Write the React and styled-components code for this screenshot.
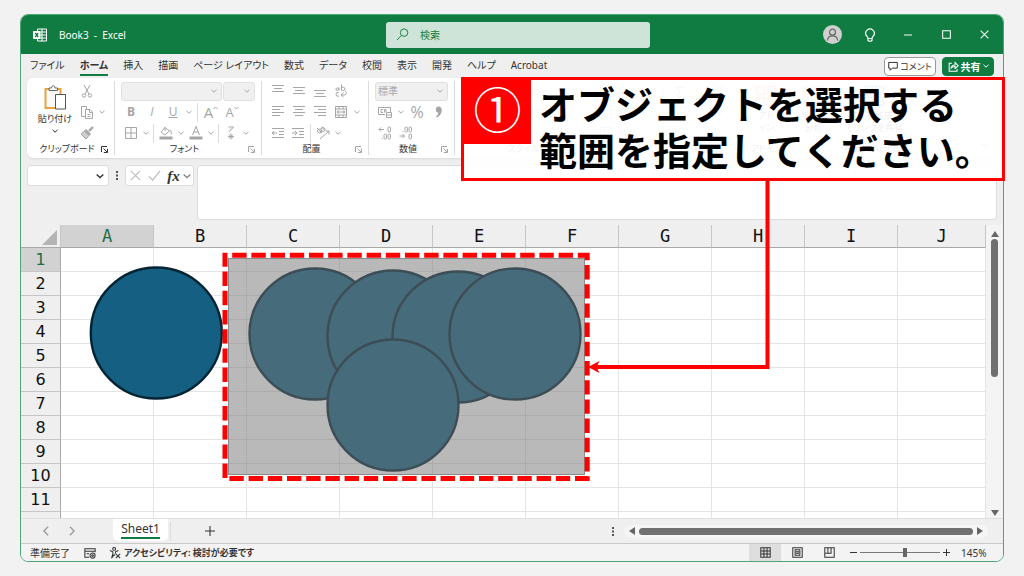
import styled, { createGlobalStyle } from "styled-components";

const GlobalStyle = createGlobalStyle`
  * {
    box-sizing: border-box;
  }
  body {
    margin: 0;
    background-color: #f2f2f2;
    color: #333;
    font-family: "Noto Sans", "Noto Sans CJK JP", sans-serif;
    font-size: 10px;
    font-feature-settings: "palt";
  }
  button, input, select, textarea {
    font: inherit;
    font-feature-settings: inherit;
    color: inherit;
    margin: 0;
    padding: 0;
    border: none;
    background: none;
    outline: none;
  }
  svg {
    display: block;
    flex: none;
  }
`;

const Page = styled.div`
  position: relative;
  height: 100vh;
  padding: 14px 20px;
`;

const Window = styled.main`
  height: 100%;
  display: flex;
  flex-direction: column;
  border: 1px solid #4ea57a;
  border-radius: 8px;
  background-color: #efefef;
  overflow: hidden;
`;

/* title bar */

const TitleBar = styled.header`
  height: 39px;
  flex: none;
  display: grid;
  grid-template-columns: 1fr 264px 1fr;
  align-items: center;
  padding-left: 12px;
  background-color: #107c41;
  color: white;
`;

const Brand = styled.div`
  display: flex;
  align-items: center;
  gap: 12px;
`;

const Title = styled.h1`
  margin: 0;
  font-size: 10px;
  font-weight: 400;
  white-space: pre;
`;

const Search = styled.label`
  height: 26px;
  display: flex;
  align-items: center;
  gap: 11px;
  padding-left: 10px;
  border-radius: 3px;
  background-color: #cfe4d8;
  color: #107c41;
`;

const SearchInput = styled.input`
  flex: 1;
  min-width: 0;
  &::placeholder {
    color: #107c41;
    opacity: 1;
  }
`;

const WindowButtons = styled.div`
  display: flex;
  justify-content: flex-end;
`;

const WindowButton = styled.button`
  width: 38px;
  height: 38px;
  display: flex;
  align-items: center;
  justify-content: center;
`;

const Avatar = styled.span`
  width: 19px;
  height: 19px;
  display: flex;
  align-items: center;
  justify-content: center;
  border-radius: 50%;
  background-color: #d0d0d0;
  color: #666;
`;

/* ribbon */

const TabRow = styled.nav`
  height: 24px;
  flex: none;
  display: flex;
  align-items: center;
  gap: 15px;
  padding: 0 9px;
`;

const Tab = styled.button`
  height: 20px;
  border-bottom: 2px solid ${(p) => (p.$active ? "#107c41" : "transparent")};
  font-weight: ${(p) => (p.$active ? 700 : 400)};
  line-height: 18px;
  white-space: nowrap;
`;

const TabActions = styled.div`
  display: flex;
  gap: 6px;
  margin-left: auto;
`;

const ActionButton = styled.button`
  width: 52px;
  height: 19px;
  display: flex;
  align-items: center;
  justify-content: center;
  gap: 2px;
  border: 1px solid ${(p) => (p.$primary ? "#107c41" : "#9a9a9a")};
  border-radius: 4px;
  background-color: ${(p) => (p.$primary ? "#107c41" : "white")};
  color: ${(p) => (p.$primary ? "white" : "#333")};
  font-size: ${(p) => (p.$primary ? 10 : 9)}px;
  font-weight: ${(p) => (p.$primary ? 700 : 400)};
  white-space: nowrap;
`;

const Ribbon = styled.section`
  height: 80px;
  flex: none;
  display: flex;
  margin: 0 6px;
  padding: 3px 0;
  border-radius: 6px;
  background-color: white;
  box-shadow: 0 1px 2px #d8d8d8;
  color: #a6a6a6;
`;

const Group = styled.div`
  width: ${(p) => p.$width}px;
  flex: none;
  display: flex;
  flex-direction: column;
  padding: 0 6px;
  border-right: 1px solid #dcdcdc;
`;

const GroupBody = styled.div`
  height: 62px;
  display: flex;
  flex-direction: column;
  gap: 1px;
`;

const ToolRow = styled.div`
  height: 20px;
  display: flex;
  align-items: center;
  gap: ${(p) => (p.$tight ? 0 : 1)}px;
`;

const GroupLabel = styled.div`
  height: 12px;
  display: flex;
  align-items: center;
  color: #333;
  font-size: 9px;
  line-height: 12px;
  text-align: center;
  white-space: nowrap;
`;

const LabelText = styled.span`
  flex: 1;
`;

const Tool = styled.button`
  width: 20px;
  height: 20px;
  display: flex;
  align-items: center;
  justify-content: center;
  flex: none;
`;

const WideTool = styled.button`
  display: flex;
  align-items: center;
  gap: 4px;
  white-space: nowrap;
`;

const BigTool = styled.button`
  width: ${(p) => p.$width}px;
  flex: none;
  display: flex;
  flex-direction: column;
  align-items: center;
  gap: 3px;
  padding-top: 4px;
  color: #333;
  font-size: 9px;
  line-height: 12px;
  white-space: pre;
`;

const Letter = styled.span`
  font-family: "Open Sans", sans-serif;
  font-size: ${(p) => p.$size || 12}px;
  font-weight: ${(p) => (p.$bold ? 700 : 400)};
  font-style: ${(p) => (p.$italic ? "italic" : "normal")};
  text-decoration: ${(p) => (p.$underline ? "underline" : "none")};
  line-height: 16px;
`;

const Divider = styled.span`
  width: 1px;
  height: 19px;
  margin: 0 2px;
  background-color: #dcdcdc;
`;

const DropButton = styled.button`
  width: 10px;
  height: 20px;
  display: flex;
  align-items: center;
  justify-content: center;
  flex: none;
`;

const SelectBox = styled.label`
  width: ${(p) => p.$width}px;
  height: 19px;
  display: flex;
  align-items: center;
  padding: 0 4px 0 2px;
  border: 1px solid #e0e0e0;
  border-radius: 3px;
  background-color: #f0f0f0;
`;

const Select = styled.select`
  flex: 1;
  min-width: 0;
  appearance: none;
`;

const Columns = styled.div`
  height: 62px;
  display: flex;
`;

const SmallTools = styled.div`
  display: flex;
  flex-direction: column;
  gap: 1px;
`;

const Collapse = styled.button`
  align-self: flex-end;
  margin: 0 8px 6px auto;
`;

/* formula bar */

const FormulaBar = styled.div`
  flex: none;
  display: flex;
  align-items: flex-start;
  padding: 7px 6px 5px;
`;

const NameBox = styled.div`
  width: 82px;
  height: 21px;
  display: flex;
  align-items: center;
  padding: 0 4px;
  border: 1px solid #dcdcdc;
  border-radius: 3px;
  background-color: white;
`;

const NameInput = styled.input`
  flex: 1;
  min-width: 0;
`;

const DotsBox = styled.span`
  width: 16px;
  height: 21px;
  display: flex;
  align-items: center;
  justify-content: center;
`;

const FxBox = styled.div`
  width: 69px;
  height: 21px;
  display: flex;
  align-items: center;
  margin-right: 3px;
  border: 1px solid #dcdcdc;
  border-radius: 3px;
  background-color: white;
  color: #888;
`;

const FxTool = styled(Tool)`
  width: 19px;
`;

const FxLetter = styled.span`
  color: #333;
  font-family: "Liberation Serif", serif;
  font-size: 15px;
  font-style: italic;
  font-weight: 700;
  line-height: 16px;
`;

const Formula = styled.textarea`
  flex: 1;
  height: 55px;
  border: 1px solid #dcdcdc;
  border-radius: 3px;
  background-color: white;
  resize: none;
`;

/* sheet */

const SheetArea = styled.div`
  flex: 1;
  min-height: 0;
  display: flex;
`;

const SheetClip = styled.div`
  flex: 1;
  min-width: 0;
  overflow: hidden;
  background-color: white;
`;

const Grid = styled.table`
  width: 100%;
  table-layout: fixed;
  border-collapse: separate;
  border-spacing: 0;
`;

const RowHeadCol = styled.col`
  width: 40px;
`;

const CellCol = styled.col`
  width: 93px;
`;

const ColHead = styled.th`
  height: 23px;
  padding: 0;
  border-right: 1px solid #c6c6c6;
  border-bottom: 1px solid #a8a8a8;
  background-color: ${(p) => (p.$active ? "#d2d2d2" : "#efefef")};
  color: ${(p) => (p.$active ? "#1f6b43" : "#111")};
  font-family: "DejaVu Sans Mono", monospace;
  font-size: 17px;
  font-weight: 400;
  line-height: 22px;
`;

const Corner = styled.td`
  padding: 0 3px 2px 0;
  border-right: 1px solid #c6c6c6;
  border-bottom: 1px solid #a8a8a8;
  background-color: #efefef;
  vertical-align: bottom;
  svg {
    margin-left: auto;
  }
`;

const RowHead = styled.th`
  height: 24px;
  padding: 0;
  border-right: 1px solid #a8a8a8;
  border-bottom: 1px solid #c6c6c6;
  background-color: ${(p) => (p.$active ? "#d2d2d2" : "#efefef")};
  color: ${(p) => (p.$active ? "#1f6b43" : "#111")};
  font-family: "DejaVu Sans", sans-serif;
  font-size: 16px;
  font-weight: 400;
  line-height: 22px;
`;

const Cell = styled.td`
  padding: 0;
  border-right: 1px solid #e4e4e4;
  border-bottom: 1px solid #e4e4e4;
`;

const VScroll = styled.div`
  width: 17px;
  display: flex;
  flex-direction: column;
  align-items: center;
  padding: 5px 0 1px;
  background-color: #f4f4f4;
`;

const VThumb = styled.div`
  width: 7px;
  height: 138px;
  margin: 1px 0 auto;
  border-radius: 4px;
  background-color: #707070;
`;

const SheetTabs = styled.div`
  height: 25px;
  flex: none;
  display: flex;
  align-items: center;
  padding-right: 15px;
  border-top: 1px solid #e0e0e0;
`;

const SheetNav = styled.div`
  width: 92px;
  display: flex;
  gap: 16px;
  padding-left: 20px;
  color: #9a9a9a;
`;

const SheetTab = styled.button`
  width: 55px;
  height: 22px;
  align-self: flex-start;
  padding-bottom: 3px;
  border-radius: 0 0 5px 5px;
  background-color: white;
  font-size: 12px;
  line-height: 16px;
  span {
    border-bottom: 2px solid #107c41;
  }
`;

const AddSheet = styled.button`
  margin-left: 32px;
`;

const HScroll = styled.div`
  width: 364px;
  height: 13px;
  display: flex;
  align-items: center;
  gap: 3px;
  margin-left: 10px;
  padding: 0 4px;
  border-radius: 7px;
  background-color: #f5f5f5;
`;

const HThumb = styled.div`
  flex: 1;
  height: 7px;
  border-radius: 4px;
  background-color: #707070;
`;

const StatusBar = styled.footer`
  height: 18px;
  flex: none;
  display: flex;
  align-items: center;
  padding: 0 15px 0 9px;
  border-top: 1px solid #c8c8c8;
  background-color: #f3f3f3;
  line-height: 12px;
`;

const Ready = styled.span`
  margin-right: 14px;
`;

const Access = styled.button`
  display: flex;
  align-items: center;
  gap: 3px;
  margin-left: 13px;
  font-size: 9px;
  font-weight: 700;
`;

const ViewButton = styled.button`
  width: 32px;
  height: 17px;
  display: flex;
  align-items: center;
  justify-content: center;
  background-color: ${(p) => (p.$active ? "#dedede" : "transparent")};
`;

const Views = styled.div`
  display: flex;
  margin-left: auto;
  margin-right: 5px;
`;

const Zoom = styled.input`
  width: 80px;
  height: 11px;
  margin: 0 3px;
  appearance: none;
  background: linear-gradient(#777, #777) center / 100% 1px no-repeat;
  &::-webkit-slider-thumb {
    appearance: none;
    width: 4px;
    height: 9px;
    background-color: #666;
  }
`;

const ZoomValue = styled.span`
  width: 27px;
  margin-left: 11px;
  white-space: nowrap;
`;

/* annotations over the window */

const Shapes = styled.svg`
  position: absolute;
  top: 0;
  left: 0;
  pointer-events: none;
`;

const Callout = styled.div`
  position: absolute;
  top: 77px;
  left: 461px;
  display: flex;
  align-items: flex-start;
  gap: 8px;
  width: 544px;
  height: 104px;
  border: 3px solid #ff0000;
  background-color: rgba(255, 255, 255, 0.92);
`;

const StepNumber = styled.span`
  width: 67px;
  height: 64px;
  display: flex;
  align-items: center;
  justify-content: center;
  padding-bottom: 10px;
  background-color: #ff0000;
  color: white;
  font-family: "Noto Sans CJK JP", sans-serif;
  font-size: 48px;
  font-weight: 400;
  line-height: 54px;
`;

const CalloutText = styled.p`
  margin: 0;
  color: black;
  font-family: "Noto Sans CJK JP", sans-serif;
  font-feature-settings: normal;
  font-size: 38px;
  font-weight: 700;
  line-height: 46px;
  white-space: nowrap;
`;

const Icon = ({ size = 14, width = 1, color = "currentColor", children }) => (
  <svg
    width={size}
    height={size}
    viewBox="0 0 14 14"
    fill="none"
    stroke={color}
    strokeWidth={width}
  >
    {children}
  </svg>
);

const Chevron = ({ size = 6 }) => (
  <svg width={size} height={size} viewBox="0 0 6 6" fill="none" stroke="currentColor">
    <path d="M0.5 1.8L3 4.2L5.5 1.8" />
  </svg>
);

const Drop = () => (
  <DropButton aria-label="メニュー">
    <Chevron />
  </DropButton>
);

const Arrow = ({ d }) => (
  <svg width="8" height="8" viewBox="0 0 8 8" fill="#666">
    <path d={d} />
  </svg>
);

const Dots = () => (
  <svg width="2" height="9" viewBox="0 0 2 9" fill="#555">
    <path d="M0 0h2v2H0zM0 3.5h2v2H0zM0 7h2v2H0z" />
  </svg>
);

const Lines = ({ rows }) => (
  <Icon>
    {rows.map(([x1, x2, y]) => (
      <path key={y} d={`M${x1} ${y}H${x2}`} />
    ))}
  </Icon>
);

const Launcher = () => (
  <svg width="7" height="7" viewBox="0 0 7 7" fill="none" stroke="currentColor">
    <path d="M0.5 6V0.5H6M2.5 2.5L6 6M6.5 2.8V6.5H2.8" />
  </svg>
);

const LauncherTone = styled.span`
  color: ${(p) => (p.$dark ? "#333" : "#a6a6a6")};
`;

const Label = ({ text, launcher, dark }) => (
  <GroupLabel>
    <LabelText>{text}</LabelText>
    {launcher && (
      <LauncherTone $dark={dark}>
        <Launcher />
      </LauncherTone>
    )}
  </GroupLabel>
);

const tabs = [
  "ファイル",
  "ホーム",
  "挿入",
  "描画",
  "ページ レイアウト",
  "数式",
  "データ",
  "校閲",
  "表示",
  "開発",
  "ヘルプ",
  "Acrobat",
];
const columns = ["A", "B", "C", "D", "E", "F", "G", "H", "I", "J"];
const rows = [1, 2, 3, 4, 5, 6, 7, 8, 9, 10, 11, 12];
const circles = [
  [315, 334],
  [393, 336],
  [458, 337],
  [515, 334],
  [393, 405],
];

const Clipboard = () => (
  <Group $width={88}>
    <Columns>
      <BigTool $width={44}>
        <svg width="22" height="25" viewBox="0 0 22 25" fill="none">
          <path d="M1.5 4H16.5V23H1.5z" fill="#fafafa" stroke="#e8a33d" strokeWidth="2" />
          <path d="M5 5.5V3H7.5C7.5 0 11 0 11 3H13.5V5.5z" fill="white" stroke="#666" />
          <path d="M11.5 9.5H21.5V24H11.5z" fill="white" stroke="#555" />
        </svg>
        <span>貼り付け</span>
        <Chevron />
      </BigTool>
      <SmallTools>
        <ToolRow>
          <Tool aria-label="切り取り">
            <Icon>
              <path d="M4 1L9 10M10 1L5 10" />
              <circle cx="4" cy="11.5" r="1.7" />
              <circle cx="10" cy="11.5" r="1.7" />
            </Icon>
          </Tool>
        </ToolRow>
        <ToolRow $tight>
          <Tool aria-label="コピー">
            <Icon>
              <path d="M5 11.5H1.5V1.5H6.5V4M5.5 4.5H10L12.5 7V13.5H5.5zM9.5 5V7.5H12.5M7.5 9.5H10.5M7.5 11.5H10.5" />
            </Icon>
          </Tool>
          <Drop />
        </ToolRow>
        <ToolRow>
          <Tool aria-label="書式のコピー">
            <Icon>
              <path d="M13 1L9 5" strokeWidth="2.4" />
              <path d="M6 3.5L10.5 8L9 9.5L4.5 5z" fill="#a6a6a6" />
              <path d="M4.5 5L1 8L6 13L9 9.5z" fill="#cfcfcf" />
            </Icon>
          </Tool>
        </ToolRow>
      </SmallTools>
    </Columns>
    <Label text="クリップボード" launcher dark />
  </Group>
);

const FontGroup = () => (
  <Group $width={147}>
    <GroupBody>
      <ToolRow>
        <SelectBox $width={101}>
          <Select aria-label="フォント名" />
          <Chevron />
        </SelectBox>
        <SelectBox $width={32}>
          <Select aria-label="フォント サイズ" />
          <Chevron />
        </SelectBox>
      </ToolRow>
      <ToolRow>
        <Tool>
          <Letter $bold>B</Letter>
        </Tool>
        <Tool>
          <Letter $italic>I</Letter>
        </Tool>
        <Tool>
          <Letter $underline>U</Letter>
        </Tool>
        <Drop />
        <Divider />
        <Tool>
          <Letter $size={15}>A</Letter>
          <svg width="5" height="12" viewBox="0 0 5 12" fill="none" stroke="currentColor">
            <path d="M0.5 3L2.5 1L4.5 3" />
          </svg>
        </Tool>
        <Tool>
          <Letter $size={13}>A</Letter>
          <svg width="5" height="12" viewBox="0 0 5 12" fill="none" stroke="currentColor">
            <path d="M0.5 1L2.5 3L4.5 1" />
          </svg>
        </Tool>
      </ToolRow>
      <ToolRow $tight>
        <Tool aria-label="罫線">
          <Icon>
            <path d="M1.5 1.5H12.5V12.5H1.5zM7 1.5V12.5M1.5 7H12.5" />
          </Icon>
        </Tool>
        <Drop />
        <Divider />
        <Tool aria-label="塗りつぶしの色">
          <Icon>
            <path d="M6 1.5L2 6L6 9L10.5 5zM6 1V5M11 4Q13.5 6 12 8.5" />
            <path d="M0.5 12H13.5" strokeWidth="3" />
          </Icon>
        </Tool>
        <Drop />
        <Tool aria-label="フォントの色">
          <Icon>
            <path d="M3.5 9L7 0.5L10.5 9M4.6 6H9.4" />
            <path d="M0.5 12H13.5" strokeWidth="3" />
          </Icon>
        </Tool>
        <Drop />
        <Divider />
        <Tool aria-label="ふりがな">
          <Icon>
            <path d="M4.5 1H9.5L7.5 3.5M7 2.5Q7 5 5 5.5" />
            <path d="M4 10.5H10M7 7.5V13.5M5 8.5L9 12.5M9 8.5L5 12.5" />
          </Icon>
        </Tool>
        <Drop />
      </ToolRow>
    </GroupBody>
    <Label text="フォント" launcher />
  </Group>
);

const AlignGroup = () => (
  <Group $width={107}>
    <GroupBody>
      <ToolRow>
        <Tool aria-label="上揃え">
          <Lines rows={[[1, 13, 1.5], [3, 11, 4.5], [1, 13, 7.5]]} />
        </Tool>
        <Tool aria-label="上下中央揃え">
          <Lines rows={[[1, 13, 3.5], [3, 11, 6.5], [1, 13, 9.5]]} />
        </Tool>
        <Tool aria-label="下揃え">
          <Lines rows={[[1, 13, 6.5], [3, 11, 9.5], [1, 13, 12.5]]} />
        </Tool>
        <Tool aria-label="折り返して表示">
          <Icon>
            <path d="M5 3.5V6.5M5 4.5Q1.5 3 2 6Q3 7 5 5.5M7.5 0.5V6.5M7.5 4Q10.5 2 11 5Q10 7.5 7.5 6M5 8.5Q2 7.5 2 10.5Q2 13 5 12M11 6.5Q14 10.5 10 11H7.5M9.5 8.5L7 11L9.5 13" />
          </Icon>
        </Tool>
      </ToolRow>
      <ToolRow>
        <Tool aria-label="左揃え">
          <Lines rows={[[1, 13, 1.5], [1, 9, 4.5], [1, 13, 7.5], [1, 9, 10.5]]} />
        </Tool>
        <Tool aria-label="中央揃え">
          <Lines rows={[[1, 13, 1.5], [3, 11, 4.5], [1, 13, 7.5], [3, 11, 10.5]]} />
        </Tool>
        <Tool aria-label="右揃え">
          <Lines rows={[[1, 13, 1.5], [5, 13, 4.5], [1, 13, 7.5], [5, 13, 10.5]]} />
        </Tool>
        <Tool aria-label="セルを結合して中央揃え">
          <Icon>
            <path d="M1.5 1.5H12.5V12.5H1.5zM1.5 4H12.5M1.5 10H12.5M5 1.5V4M9 1.5V4M5 10V12.5M9 10V12.5M3 7H11M5 5.5L3 7L5 8.5M9 5.5L11 7L9 8.5" />
          </Icon>
        </Tool>
        <Drop />
      </ToolRow>
      <ToolRow $tight>
        <Tool aria-label="インデントを減らす">
          <Icon>
            <path d="M1 2.5H13M8 5.5H13M8 8.5H13M1 11.5H13M1 7H6M3 5L1 7L3 9" />
          </Icon>
        </Tool>
        <Tool aria-label="インデントを増やす">
          <Icon>
            <path d="M1 2.5H13M8 5.5H13M8 8.5H13M1 11.5H13M1 7H6M4 5L6 7L4 9" />
          </Icon>
        </Tool>
        <Divider />
        <Tool aria-label="方向">
          <Icon>
            <circle cx="3.5" cy="5" r="2" />
            <circle cx="7" cy="3.5" r="2" />
            <path d="M1 2L6 7M5.5 0.5L9 5M4 13L13 5M9.5 5H13V8.5" />
          </Icon>
        </Tool>
        <Drop />
      </ToolRow>
    </GroupBody>
    <Label text="配置" launcher />
  </Group>
);

const DecimalIcon = ({ left }) => (
  <Icon>
    <path d={left ? "M1 3.5H6M3 1.5L1 3.5L3 5.5" : "M0.5 10H5.5M3.5 8L5.5 10L3.5 12"} />
    <rect x="10" y="1" width="2.5" height="5" rx="1.2" />
    <rect x="10" y="8" width="2.5" height="5" rx="1.2" />
    {left ? (
      <rect x="6" y="8" width="2.5" height="5" rx="1.2" />
    ) : (
      <rect x="6" y="1" width="2.5" height="5" rx="1.2" />
    )}
    <path d={left ? "M3.5 12.5H4.5" : "M3.5 5.5H4.5"} />
  </Icon>
);

const NumberGroup = () => (
  <Group $width={86}>
    <GroupBody>
      <ToolRow>
        <SelectBox $width={73}>
          <Select aria-label="表示形式" defaultValue="標準">
            <option>標準</option>
          </Select>
          <Chevron />
        </SelectBox>
      </ToolRow>
      <ToolRow>
        <Tool aria-label="通貨表示形式">
          <Icon>
            <path d="M0.5 2.5H12.5V7M0.5 2.5V9.5H7M5 4.5H3V7.5H5M6.5 7.5V4.5H8V7.5M8.5 7.5H13.5V12.5H8.5zM8.5 10H13.5" />
          </Icon>
        </Tool>
        <Drop />
        <Tool>
          <Letter $size={16}>%</Letter>
        </Tool>
        <Tool aria-label="桁区切りスタイル">
          <svg width="7" height="12" viewBox="0 0 7 12" fill="currentColor">
            <path d="M3.4 0.5A3.2 3.2 0 0 0 3.4 6.8Q3.2 9 1 10.5L2 11.5Q6.8 9 6.8 4A3.2 3.4 0 0 0 3.4 0.5z" />
          </svg>
        </Tool>
      </ToolRow>
      <ToolRow>
        <Tool aria-label="小数点以下の表示桁数を増やす">
          <DecimalIcon left />
        </Tool>
        <Tool aria-label="小数点以下の表示桁数を減らす">
          <DecimalIcon />
        </Tool>
      </ToolRow>
    </GroupBody>
    <Label text="数値" launcher />
  </Group>
);

const TableIcon = () => (
  <Icon>
    <path d="M1.5 1.5H12.5V12.5H1.5zM1.5 5H12.5M1.5 9H12.5M5 1.5V12.5" />
  </Icon>
);

const ListGroup = ({ width, items, label }) => (
  <Group $width={width}>
    <GroupBody>
      {items.map((item) => (
        <ToolRow key={item}>
          <WideTool>
            <TableIcon />
            {item}
            <Chevron />
          </WideTool>
        </ToolRow>
      ))}
    </GroupBody>
    <Label text={label} />
  </Group>
);

const EditGroup = () => (
  <Group $width={79}>
    <GroupBody>
      <ToolRow>
        <Tool>
          <Letter $size={15}>Σ</Letter>
        </Tool>
        <Drop />
        <Divider />
        <Tool aria-label="並べ替え">
          <Icon>
            <path d="M2 1H7L2 6H7M8 3H13L10.5 6V12" />
          </Icon>
        </Tool>
        <Drop />
      </ToolRow>
      <ToolRow>
        <Tool aria-label="フィル">
          <Icon>
            <path d="M1.5 1.5H12.5V12.5H1.5zM7 3V10M4 7.5L7 10.5L10 7.5" />
          </Icon>
        </Tool>
        <Drop />
        <Divider />
        <Tool aria-label="検索と選択">
          <Icon>
            <circle cx="8" cy="5.5" r="4" />
            <path d="M5 8.5L1 13" />
          </Icon>
        </Tool>
        <Drop />
      </ToolRow>
      <ToolRow>
        <Tool aria-label="クリア">
          <Icon>
            <path d="M1.5 8L8 1.5L12.5 6L6 12.5zM4.5 5L9 9.5" />
          </Icon>
        </Tool>
        <Drop />
      </ToolRow>
    </GroupBody>
    <Label text="編集" />
  </Group>
);

const ExtraGroup = ({ width, color, text, label }) => (
  <Group $width={width}>
    <Columns>
      <BigTool $width={width - 13}>
        <Icon size={22} color={color}>
          <path d="M1 1H6V6H1zM8 1H13V6H8zM1 8H6V13H1zM8 8H13V13H8z" />
        </Icon>
        <span>{text}</span>
      </BigTool>
    </Columns>
    <Label text={label} />
  </Group>
);

const Annotations = () => (
  <Shapes width="1010" height="500" viewBox="0 0 1010 500" aria-hidden="true">
    <circle cx="156.3" cy="333" r="65.5" fill="#156082" stroke="#042433" strokeWidth="2.4" />
    {circles.map(([cx, cy]) => (
      <circle
        key={`${cx}-${cy}`}
        cx={cx}
        cy={cy}
        r="65.5"
        fill="#156082"
        stroke="#042433"
        strokeWidth="2.4"
      />
    ))}
    <rect
      x="228.5"
      y="258.5"
      width="356"
      height="216"
      fill="#757575"
      fillOpacity="0.51"
      stroke="#8a8a8a"
    />
    <path
      d="M225 255.2H587.2V478.4H225z"
      fill="none"
      stroke="#ff0000"
      strokeWidth="5"
      strokeDasharray="14.4 4.8"
      strokeDashoffset="12"
    />
    <path d="M767.5 180V367H594" fill="none" stroke="#ff0000" strokeWidth="4" />
    <path d="M588 367L599.5 361L596.5 367L599.5 373z" fill="#ff0000" />
  </Shapes>
);

const App = () => {
  return (
    <Page>
      <GlobalStyle />
      <Window>
        <TitleBar>
          <Brand>
            <Icon>
              <path d="M4.5 1H13.5V13H4.5zM9 1V13M4.5 4H13.5M4.5 7H13.5M4.5 10H13.5" />
              <path d="M0.5 3.5H7V10.5H0.5z" fill="white" />
              <path d="M2.3 5L5.2 9M5.2 5L2.3 9" stroke="#107c41" strokeWidth="1.3" />
            </Icon>
            <Title>{"Book3  -  Excel"}</Title>
          </Brand>
          <Search>
            <Icon size={13}>
              <circle cx="8.7" cy="5" r="4" />
              <path d="M5.8 8L1 13" />
            </Icon>
            <SearchInput placeholder="検索" aria-label="検索" />
          </Search>
          <WindowButtons>
            <WindowButton aria-label="アカウント">
              <Avatar>
                <Icon size={13} width={1.3}>
                  <circle cx="7" cy="4.5" r="3.2" />
                  <path d="M1.5 13.5Q2 8.5 7 8.5Q12 8.5 12.5 13.5" />
                </Icon>
              </Avatar>
            </WindowButton>
            <WindowButton aria-label="ヒント">
              <Icon width={1.2}>
                <path d="M5 10.5Q4.8 9 3.5 7.8A4.3 4.3 0 1 1 10.5 7.8Q9.2 9 9 10.5zM5 10.5V12.5Q7 14 9 12.5V10.5" />
              </Icon>
            </WindowButton>
            <WindowButton aria-label="最小化">
              <Icon size={8} width={1.7}>
                <path d="M0 7H14" />
              </Icon>
            </WindowButton>
            <WindowButton aria-label="最大化">
              <Icon size={9} width={1.6}>
                <path d="M1 1H13V13H1z" />
              </Icon>
            </WindowButton>
            <WindowButton aria-label="閉じる">
              <Icon size={9} width={1.6}>
                <path d="M1 1L13 13M13 1L1 13" />
              </Icon>
            </WindowButton>
          </WindowButtons>
        </TitleBar>

        <TabRow>
          {tabs.map((tab) => (
            <Tab key={tab} $active={tab === "ホーム"}>
              {tab}
            </Tab>
          ))}
          <TabActions>
            <ActionButton>
              <Icon size={10} width={1.4}>
                <path d="M1 2H13V10H6L3 13V10H1z" />
              </Icon>
              コメント
            </ActionButton>
            <ActionButton $primary>
              <Icon size={11} width={1.3}>
                <path d="M5 3H1.5V13H11.5V10M4 9Q4.5 5 9 5V2L13 6L9 9.5V7Q6 7 4 9z" />
              </Icon>
              共有
              <Chevron />
            </ActionButton>
          </TabActions>
        </TabRow>

        <Ribbon>
          <Clipboard />
          <FontGroup />
          <AlignGroup />
          <NumberGroup />
          <ListGroup
            width={138}
            items={["条件付き書式", "テーブルの書式設定", "スタイル"]}
            label="スタイル"
          />
          <ListGroup width={71} items={["挿入", "削除", "書式"]} label="セル" />
          <EditGroup />
          <ExtraGroup width={47} color="#e8704a" text={"アド\nイン"} label="アドイン" />
          <ExtraGroup width={48} color="#a6a6a6" text={"データ\n分析"} label="" />
          <ExtraGroup
            width={73}
            color="#4a7fe8"
            text={"PDF を作成し\nてリンクを共有"}
            label="Adobe Acrobat"
          />
          <Collapse aria-label="リボンを折りたたむ">
            <Chevron size={8} />
          </Collapse>
        </Ribbon>

        <FormulaBar>
          <NameBox>
            <NameInput aria-label="名前ボックス" />
            <Chevron size={8} />
          </NameBox>
          <DotsBox>
            <Dots />
          </DotsBox>
          <FxBox>
            <FxTool aria-label="キャンセル">
              <Icon size={11} color="#bbb" width={1.4}>
                <path d="M1 1L13 13M13 1L1 13" />
              </Icon>
            </FxTool>
            <FxTool aria-label="入力">
              <Icon size={13} color="#bbb" width={1.3}>
                <path d="M1 8L5 12L13 2" />
              </Icon>
            </FxTool>
            <FxTool aria-label="関数の挿入">
              <FxLetter>fx</FxLetter>
            </FxTool>
            <Chevron size={8} />
          </FxBox>
          <Formula aria-label="数式バー" />
        </FormulaBar>

        <SheetArea>
          <SheetClip>
            <Grid>
              <colgroup>
                <RowHeadCol />
                {columns.slice(0, -1).map((c) => (
                  <CellCol key={c} />
                ))}
                <col />
              </colgroup>
              <thead>
                <tr>
                  <Corner>
                    <svg width="15" height="15" viewBox="0 0 15 15" fill="#b4b4b4">
                      <path d="M15 0V15H0z" />
                    </svg>
                  </Corner>
                  {columns.map((c) => (
                    <ColHead key={c} scope="col" $active={c === "A"}>
                      {c}
                    </ColHead>
                  ))}
                </tr>
              </thead>
              <tbody>
                {rows.map((r) => (
                  <tr key={r}>
                    <RowHead scope="row" $active={r === 1}>
                      {r < 12 && r}
                    </RowHead>
                    {columns.map((c) => (
                      <Cell key={c} />
                    ))}
                  </tr>
                ))}
              </tbody>
            </Grid>
          </SheetClip>
          <VScroll>
            <Arrow d="M4 1L8 7H0z" />
            <VThumb />
            <Arrow d="M4 7L0 1H8z" />
          </VScroll>
        </SheetArea>

        <SheetTabs>
          <SheetNav>
            <button aria-label="前のシート">
              <Icon size={10} width={1.8}>
                <path d="M10 1L4 7L10 13" />
              </Icon>
            </button>
            <button aria-label="次のシート">
              <Icon size={10} width={1.8}>
                <path d="M4 1L10 7L4 13" />
              </Icon>
            </button>
          </SheetNav>
          <SheetTab>
            <span>Sheet1</span>
          </SheetTab>
          <Divider />
          <AddSheet aria-label="新しいシート">
            <Icon size={10} width={1.5}>
              <path d="M7 0V14M0 7H14" />
            </Icon>
          </AddSheet>
          <Views />
          <Dots />
          <HScroll>
            <Arrow d="M1 4L7 0V8z" />
            <HThumb />
            <Arrow d="M7 4L1 0V8z" />
          </HScroll>
        </SheetTabs>

        <StatusBar>
          <Ready>準備完了</Ready>
          <Icon size={12} width={1.2}>
            <path d="M6 12H1V2H13V6M1 5H13M3 8H6" />
            <circle cx="10" cy="10" r="3" />
            <circle cx="10" cy="10" r="1" />
          </Icon>
          <Access>
            <Icon size={12} width={1.2}>
              <circle cx="6" cy="2.2" r="1.7" />
              <path d="M1 4L4.5 5.5V8L3 13L6 9L7 10M11 4L7.5 5.5V8M8 8L13 13M13 8L8 13" />
            </Icon>
            アクセシビリティ: 検討が必要です
          </Access>
          <Views>
            <ViewButton $active aria-label="標準">
              <Icon size={11} width={1.3}>
                <path d="M1 1H13V13H1zM5 1V13M9 1V13M1 5H13M1 9H13" />
              </Icon>
            </ViewButton>
            <ViewButton aria-label="ページ レイアウト">
              <Icon size={11} width={1.3}>
                <path d="M1 1H13V13H1zM4 3.5H10V10.5H4zM5 6H9M5 8H9" />
              </Icon>
            </ViewButton>
            <ViewButton aria-label="改ページ プレビュー">
              <Icon size={11} width={1.3}>
                <path d="M1 1H13V13H1zM5 1V8M1 8H9V1" />
              </Icon>
            </ViewButton>
          </Views>
          <button aria-label="縮小">
            <Icon size={7} width={2}>
              <path d="M0 7H14" />
            </Icon>
          </button>
          <Zoom type="range" min="0" max="100" defaultValue="57" aria-label="ズーム" />
          <button aria-label="拡大">
            <Icon size={7} width={2}>
              <path d="M0 7H14M7 0V14" />
            </Icon>
          </button>
          <ZoomValue>145%</ZoomValue>
        </StatusBar>
      </Window>

      <Annotations />
      <Callout>
        <StepNumber>①</StepNumber>
        <CalloutText>
          オブジェクトを選択する
          <br />
          範囲を指定してください。
        </CalloutText>
      </Callout>
    </Page>
  );
};

export default App;
